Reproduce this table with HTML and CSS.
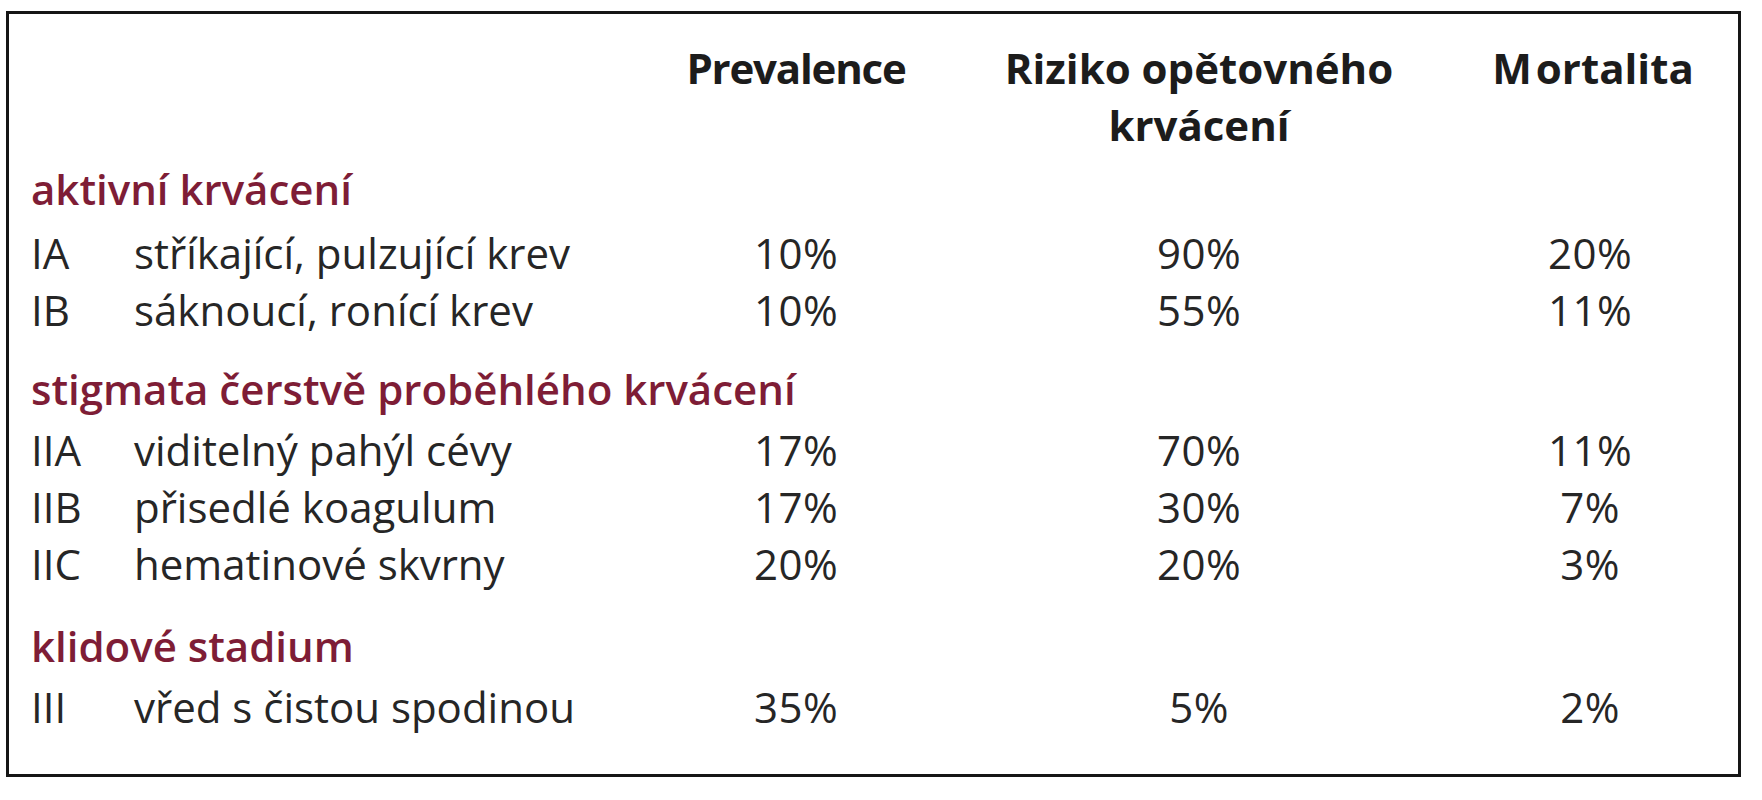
FILE: index.html
```html
<!DOCTYPE html>
<html lang="cs">
<head>
<meta charset="utf-8">
<title>Klasifikace krvácení</title>
<link rel="stylesheet" href="styles.css">
</head>
<body>
<div class="box">
  <div class="row head">
    <div class="code"></div>
    <div class="desc"></div>
    <div class="num h-prev">Prevalence</div>
    <div class="num h-risk">Riziko opětovného<br>krvácení</div>
    <div class="num h-mort"><span class="cap">M</span>ortalita</div>
  </div>

  <div class="section first">aktivní krvácení</div>
  <div class="row">
    <div class="code">IA</div>
    <div class="desc">stříkající, pulzující krev</div>
    <div class="num">10%</div>
    <div class="num">90%</div>
    <div class="num">20%</div>
  </div>
  <div class="row">
    <div class="code">IB</div>
    <div class="desc">sáknoucí, ronící krev</div>
    <div class="num">10%</div>
    <div class="num">55%</div>
    <div class="num">11%</div>
  </div>

  <div class="section">stigmata čerstvě proběhlého krvácení</div>
  <div class="row">
    <div class="code">IIA</div>
    <div class="desc">viditelný pahýl cévy</div>
    <div class="num">17%</div>
    <div class="num">70%</div>
    <div class="num">11%</div>
  </div>
  <div class="row">
    <div class="code">IIB</div>
    <div class="desc">přisedlé koagulum</div>
    <div class="num">17%</div>
    <div class="num">30%</div>
    <div class="num">7%</div>
  </div>
  <div class="row">
    <div class="code">IIC</div>
    <div class="desc">hematinové skvrny</div>
    <div class="num">20%</div>
    <div class="num">20%</div>
    <div class="num">3%</div>
  </div>

  <div class="section last">klidové stadium</div>
  <div class="row">
    <div class="code">III</div>
    <div class="desc">vřed s čistou spodinou</div>
    <div class="num">35%</div>
    <div class="num">5%</div>
    <div class="num">2%</div>
  </div>
</div>
</body>
</html>
```

FILE: styles.css
```css
html, body {
  margin: 0;
  padding: 0;
  background: #ffffff;
}

body {
  font-family: "Open Sans", "Noto Sans", "DejaVu Sans", sans-serif;
  font-size: 42px;
  line-height: 57px;
  color: #262626;
}

.box {
  margin: 11px 0 0 6px;
  width: 1735px;
  box-sizing: border-box;
  border: 3px solid #161616;
  padding: 25px 10px 39px 22px;
}

.row {
  display: grid;
  grid-template-columns: 103px 512px 300px 506px 276px;
}

.num {
  text-align: center;
  letter-spacing: 0.5px;
}

.head {
  font-weight: 700;
  color: #1c1c1c;
}

.head .num {
  letter-spacing: 0;
}

.head .h-prev {
  letter-spacing: -1.2px;
}

.head .h-mort {
  padding-left: 6px;
}

.head .cap {
  margin-right: 4px;
}

.section {
  color: #7e1d36;
  font-weight: 600;
  margin-top: 22px;
  padding-bottom: 4px;
}

.section.first {
  margin-top: 7px;
  padding-bottom: 7px;
}

.section.last {
  margin-top: 25px;
}
```
